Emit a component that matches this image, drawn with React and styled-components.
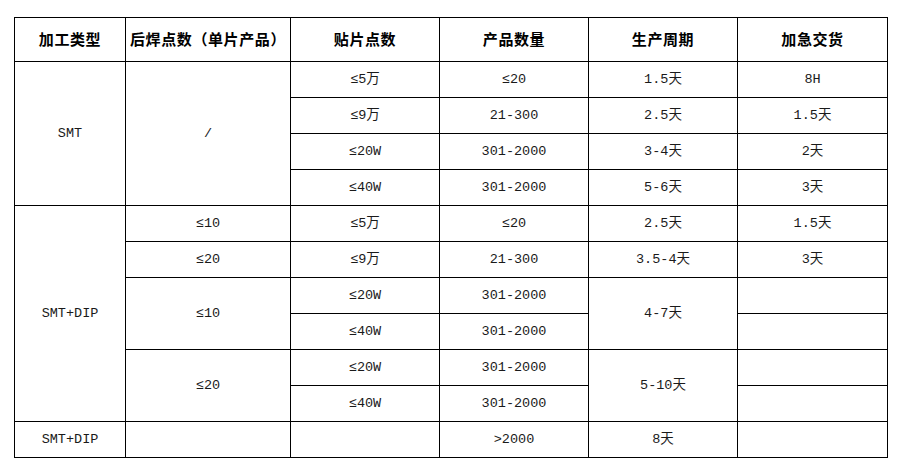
import React from "react";
import styled, { createGlobalStyle } from "styled-components";

const Global = createGlobalStyle`
  html, body { margin: 0; padding: 0; background: #fff; }
  body { font-family: "Liberation Mono", "Noto Sans CJK SC", monospace; }
`;

const Page = styled.div`
  padding: 17px 0 0 14px;
`;

const Table = styled.table`
  border-collapse: collapse;
  table-layout: fixed;
  width: 873px;
  color: #1a1a1a;
`;

const Col = styled.col`
  width: ${(p) => p.$w}px;
`;

const HeadRow = styled.tr`
  height: 44px;
`;

const Row = styled.tr`
  height: 36px;
`;

const Th = styled.th`
  border: 1px solid #000;
  padding: 0 0 2px;
  font-family: "Noto Sans CJK SC", sans-serif;
  font-weight: 700;
  font-size: 15px;
  line-height: 20px;
  letter-spacing: 0.6px;
  color: #000;
  text-align: center;
  vertical-align: middle;
  white-space: nowrap;
`;

const Td = styled.td`
  border: 1px solid #000;
  padding: 0;
  font-family: "Liberation Mono", "Noto Sans CJK SC", monospace;
  font-size: 13.5px;
  line-height: 18px;
  text-align: center;
  vertical-align: middle;
  white-space: nowrap;
`;

const widths = [111, 165, 149, 149, 149, 150];
const headers = ["加工类型", "后焊点数（单片产品）", "贴片点数", "产品数量", "生产周期", "加急交货"];

export default function App() {
  return (
    <>
      <Global />
      <Page>
        <Table>
          <colgroup>
            {widths.map((w, i) => (
              <Col key={i} $w={w} />
            ))}
          </colgroup>
          <thead>
            <HeadRow>
              {headers.map((h) => (
                <Th key={h}>{h}</Th>
              ))}
            </HeadRow>
          </thead>
          <tbody>
            <Row>
              <Td rowSpan={4}>SMT</Td>
              <Td rowSpan={4}>/</Td>
              <Td>≤5万</Td>
              <Td>≤20</Td>
              <Td>1.5天</Td>
              <Td>8H</Td>
            </Row>
            <Row>
              <Td>≤9万</Td>
              <Td>21-300</Td>
              <Td>2.5天</Td>
              <Td>1.5天</Td>
            </Row>
            <Row>
              <Td>≤20W</Td>
              <Td>301-2000</Td>
              <Td>3-4天</Td>
              <Td>2天</Td>
            </Row>
            <Row>
              <Td>≤40W</Td>
              <Td>301-2000</Td>
              <Td>5-6天</Td>
              <Td>3天</Td>
            </Row>
            <Row>
              <Td rowSpan={6}>SMT+DIP</Td>
              <Td>≤10</Td>
              <Td>≤5万</Td>
              <Td>≤20</Td>
              <Td>2.5天</Td>
              <Td>1.5天</Td>
            </Row>
            <Row>
              <Td>≤20</Td>
              <Td>≤9万</Td>
              <Td>21-300</Td>
              <Td>3.5-4天</Td>
              <Td>3天</Td>
            </Row>
            <Row>
              <Td rowSpan={2}>≤10</Td>
              <Td>≤20W</Td>
              <Td>301-2000</Td>
              <Td rowSpan={2}>4-7天</Td>
              <Td></Td>
            </Row>
            <Row>
              <Td>≤40W</Td>
              <Td>301-2000</Td>
              <Td></Td>
            </Row>
            <Row>
              <Td rowSpan={2}>≤20</Td>
              <Td>≤20W</Td>
              <Td>301-2000</Td>
              <Td rowSpan={2}>5-10天</Td>
              <Td></Td>
            </Row>
            <Row>
              <Td>≤40W</Td>
              <Td>301-2000</Td>
              <Td></Td>
            </Row>
            <Row>
              <Td>SMT+DIP</Td>
              <Td></Td>
              <Td></Td>
              <Td>&gt;2000</Td>
              <Td>8天</Td>
              <Td></Td>
            </Row>
          </tbody>
        </Table>
      </Page>
    </>
  );
}
